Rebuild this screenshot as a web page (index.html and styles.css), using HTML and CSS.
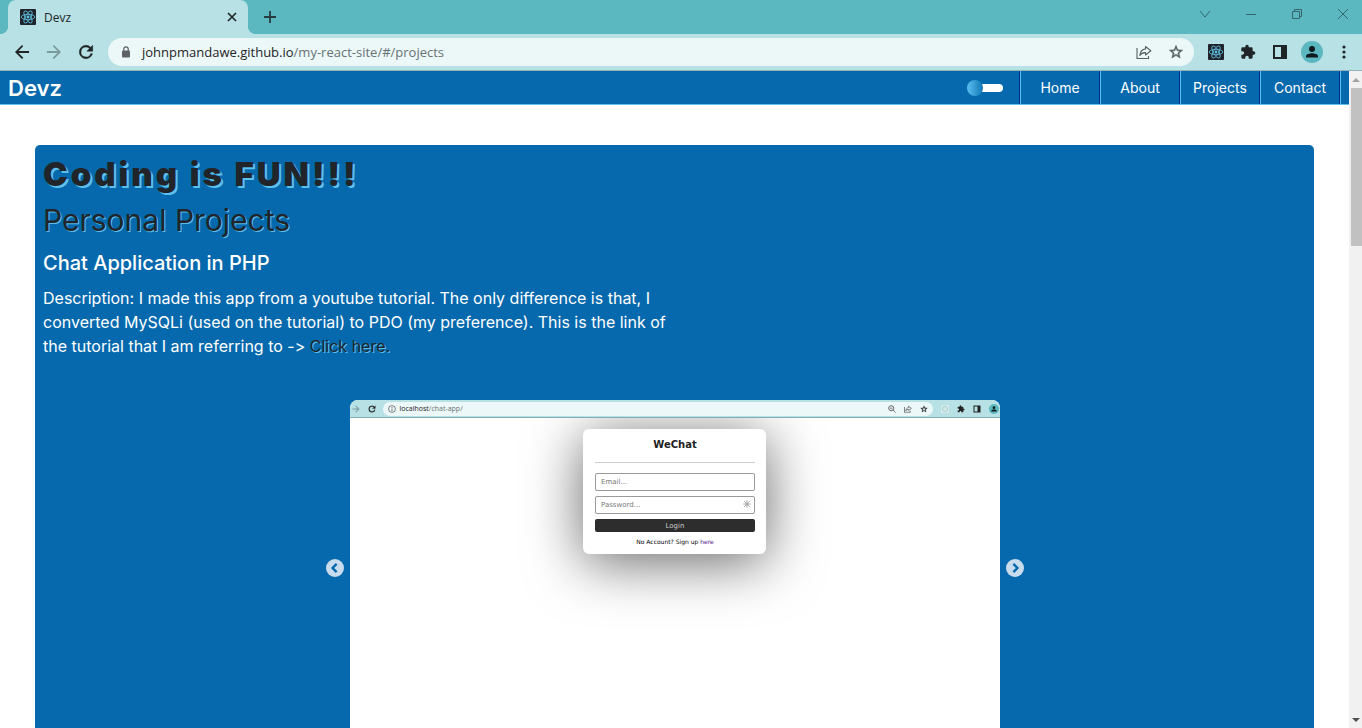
FILE: index.html
```html
<!DOCTYPE html>
<html lang="en">
<head>
<meta charset="utf-8">
<title>Devz</title>
<link rel="stylesheet" href="styles.css">
</head>
<body>
<svg class="defs" aria-hidden="true">
  <symbol id="react" viewBox="0 0 16 16">
    <rect width="16" height="16" rx="1" fill="#20232a"/>
    <g fill="none" stroke="#61c8ea" stroke-width=".8">
      <ellipse cx="8" cy="8" rx="6.8" ry="2.7"/>
      <ellipse cx="8" cy="8" rx="6.8" ry="2.7" transform="rotate(60 8 8)"/>
      <ellipse cx="8" cy="8" rx="6.8" ry="2.7" transform="rotate(120 8 8)"/>
    </g>
    <circle cx="8" cy="8" r="1.4" fill="#61c8ea"/>
  </symbol>
  <symbol id="arrow" viewBox="0 0 24 24"><path d="M20.500 10.800H7.830l5.590-5.590L12 3.600 3.600 12l8.400 8.400 1.610-1.610L7.830 13.200h12.670z"/></symbol>
  <symbol id="reload" viewBox="0 0 24 24"><path stroke="currentColor" stroke-width=".6" d="M17.650 6.350A7.960 7.960 0 0 0 12 4a8 8 0 1 0 7.730 10h-2.080A6 6 0 1 1 12 6c1.660 0 3.140.69 4.220 1.780L13 11h7V4z"/></symbol>
  <symbol id="share" viewBox="0 0 16 16"><g fill="none" stroke="currentColor" stroke-width="1.1"><path d="M1 4v10.500h11.500V12"/><path d="M9.500 2.500 14.800 6.800 9.500 11V8.600C6.500 8.500 5 9.500 3.800 11.500 4.200 7.800 6 5.300 9.500 4.900z" stroke-linejoin="round"/></g></symbol>
  <symbol id="star" viewBox="0 0 24 24"><path stroke="currentColor" stroke-width=".8" d="m22 9.240-7.190-.62L12 2 9.190 8.630 2 9.240l5.460 4.730L5.820 21 12 17.270 18.180 21l-1.630-7.030zM12 15.400l-3.760 2.270 1-4.280-3.320-2.880 4.380-.38L12 6.100l1.710 4.040 4.380.38-3.320 2.880 1 4.280z"/></symbol>
  <symbol id="puzzle" viewBox="0 0 24 24"><path d="M20.500 11H19V7a2 2 0 0 0-2-2h-4V3.500a2.500 2.500 0 0 0-5 0V5H4a2 2 0 0 0-2 2v3.800h1.500a2.700 2.700 0 0 1 0 5.400H2V20a2 2 0 0 0 2 2h3.800v-1.500a2.700 2.700 0 0 1 5.400 0V22H17a2 2 0 0 0 2-2v-4h1.500a2.500 2.500 0 0 0 0-5z"/></symbol>
  <symbol id="panel" viewBox="0 0 16 16"><path fill-rule="evenodd" d="M1 1h14v14H1zM3 3v10h6V3z"/></symbol>
  <symbol id="avatar" viewBox="0 0 22 22"><circle cx="11" cy="11" r="11" fill="#5bb8c1"/><circle cx="11" cy="8" r="3" fill="#111a1c"/><path d="M5 16.500v-1.300C5 13.200 9 12.300 11 12.300s6 .9 6 2.900v1.300z" fill="#111a1c"/></symbol>
</svg>

<header class="browser">
  <div class="tabstrip">
    <div class="tab">
      <svg class="i16"><use href="#react"/></svg>
      <span class="tab-title">Devz</span>
      <button class="tab-close" aria-label="Close tab"><svg class="i10" viewBox="0 0 10 10"><path d="m1 1 8 8M9 1 1 9" stroke="#20282a" stroke-width="1.700"/></svg></button>
    </div>
    <button class="new-tab" aria-label="New tab"><svg class="i12" viewBox="0 0 12 12"><path d="M6 0v12M0 6h12" stroke="#263c40" stroke-width="1.800"/></svg></button>
    <div class="window-buttons">
      <button aria-label="Search tabs"><svg class="i12" viewBox="0 0 12 12"><path d="m1 3 5 6 5-6"/></svg></button>
      <button aria-label="Minimize"><svg class="i12" viewBox="0 0 12 12"><path d="M1 6.500h10"/></svg></button>
      <button aria-label="Restore"><svg class="i12" viewBox="0 0 12 12"><path d="M1.500 3.500h7v7h-7zM3.500 3.500v-2h7v7h-2"/></svg></button>
      <button aria-label="Close window"><svg class="i12" viewBox="0 0 12 12"><path d="m1 1 10 10M11 1 1 11"/></svg></button>
    </div>
  </div>
  <div class="toolbar">
    <button class="tool" aria-label="Back"><svg class="i20"><use href="#arrow"/></svg></button>
    <button class="tool dim" aria-label="Forward"><svg class="i20 flip"><use href="#arrow"/></svg></button>
    <button class="tool" aria-label="Reload"><svg class="i20"><use href="#reload"/></svg></button>
    <div class="omnibox">
      <svg class="lock" viewBox="0 0 10 12"><rect x="1" y="4.500" width="8" height="7" rx="1" fill="#5f6368"/><path d="M2.800 5V3a2.200 2.200 0 0 1 4.400 0v2" fill="none" stroke="#5f6368" stroke-width="1.200"/></svg>
      <span class="url">johnpmandawe.github.io<span class="path">/my-react-site/#/projects</span></span>
      <button class="tool" aria-label="Share"><svg class="i16"><use href="#share"/></svg></button>
      <button class="tool" aria-label="Bookmark"><svg class="i16"><use href="#star"/></svg></button>
    </div>
    <button class="tool" aria-label="React tools"><svg class="i16"><use href="#react"/></svg></button>
    <button class="tool" aria-label="Extensions"><svg class="i16"><use href="#puzzle"/></svg></button>
    <button class="tool" aria-label="Side panel"><svg class="i16"><use href="#panel"/></svg></button>
    <button class="tool" aria-label="Profile"><svg class="i22"><use href="#avatar"/></svg></button>
    <button class="tool" aria-label="Menu"><svg class="i16" viewBox="0 0 16 16"><circle cx="8" cy="3" r="1.600"/><circle cx="8" cy="8" r="1.600"/><circle cx="8" cy="13" r="1.600"/></svg></button>
  </div>
</header>

<div class="viewport">
  <div class="page">
    <nav class="navbar">
      <a class="brand" href="#/">Devz</a>
      <input class="theme" type="checkbox" role="switch" aria-label="Dark theme">
      <div class="links">
        <a href="#/">Home</a>
        <a href="#/about">About</a>
        <a href="#/projects">Projects</a>
        <a href="#/contact">Contact</a>
      </div>
    </nav>
    <main class="card">
      <h1>Coding is FUN!!!</h1>
      <h2>Personal Projects</h2>
      <h3>Chat Application in PHP</h3>
      <p class="description">Description: I made this app from a youtube tutorial. The only difference is that, I converted MySQLi (used on the tutorial) to PDO (my preference). This is the link of the tutorial that I am referring to -&gt; <a href="#/tutorial">Click here.</a></p>
      <section class="carousel" aria-label="Screens">
        <button class="step" aria-label="Previous"><svg class="i18" viewBox="0 0 18 18"><circle cx="9" cy="9" r="9" fill="#c8dcee"/><path d="M10.600 4.800 6.600 9l4 4.200" fill="none" stroke="#0669ad" stroke-width="2.400"/></svg></button>
        <div class="slide">
          <div class="shot-bar">
            <svg class="i10 dim flip"><use href="#arrow"/></svg>
            <svg class="i10"><use href="#reload"/></svg>
            <div class="shot-omnibox">
              <svg class="i8" viewBox="0 0 8 8"><circle cx="4" cy="4" r="3.400" fill="none" stroke="#5f6368" stroke-width=".8"/><path d="M4 3.500V6M4 2v.9" stroke="#5f6368" stroke-width=".9"/></svg>
              <span class="shot-url">localhost<span class="path">/chat-app/</span></span>
              <svg class="i8" viewBox="0 0 8 8"><circle cx="3.200" cy="3.200" r="2.500" fill="none" stroke="#5f6368"/><path d="m5 5 2.500 2.500M2 3.200h2.400" stroke="#5f6368" stroke-width=".9"/></svg>
              <svg class="i8"><use href="#share"/></svg>
              <svg class="i8"><use href="#star"/></svg>
            </div>
            <svg class="i8" viewBox="0 0 16 16"><rect width="16" height="16" fill="#d5e9ea"/><circle cx="8" cy="8" r="5" fill="none" stroke="#a9cdd0" stroke-width="2"/></svg>
            <svg class="i8"><use href="#puzzle"/></svg>
            <svg class="i8"><use href="#panel"/></svg>
            <svg class="i10"><use href="#avatar"/></svg>
          </div>
          <div class="shot-body">
            <form class="login">
              <h4>WeChat</h4>
              <input type="email" placeholder="Email..." aria-label="Email">
              <div class="password">
                <input type="password" placeholder="Password..." aria-label="Password">
                <svg class="i8 key" viewBox="0 0 8 8"><path d="M4 0v8M0 4h8M1 1l6 6M7 1 1 7" stroke="#999" stroke-width=".7"/><circle cx="4" cy="4" r="1.600" fill="#aaa"/></svg>
              </div>
              <button type="button">Login</button>
              <p>No Account? Sign up <a href="#/signup">here</a></p>
            </form>
          </div>
        </div>
        <button class="step" aria-label="Next"><svg class="i18" viewBox="0 0 18 18"><circle cx="9" cy="9" r="9" fill="#c8dcee"/><path d="m7.400 4.800 4 4.200-4 4.200" fill="none" stroke="#0669ad" stroke-width="2.400"/></svg></button>
      </section>
    </main>
  </div>
  <div class="scrollbar" aria-hidden="true">
    <svg viewBox="0 0 13 17"><path d="M3 11h8L7 7z" fill="#a3a3a3"/></svg>
    <div class="thumb"></div>
    <svg viewBox="0 0 13 17"><path d="M3 7h8l-4 4z" fill="#505050"/></svg>
  </div>
</div>
</body>
</html>
```

FILE: styles.css
```css
* { box-sizing: border-box; }
body {
  margin: 0;
  height: 100vh;
  display: flex;
  flex-direction: column;
  overflow: hidden;
  font-family: Inter, "Open Sans", sans-serif;
  font-feature-settings: "calt" 0;
  color: #fff;
  background: #fff;
}
h1, h2, h3, h4, p { margin: 0; }
button { border: 0; padding: 0; background: none; font: inherit; color: inherit; }
a { color: inherit; text-decoration: none; }
svg { display: block; flex: none; fill: currentColor; }
.defs { position: absolute; width: 0; height: 0; }
.i8 { width: 8px; height: 8px; }
.i10 { width: 10px; height: 10px; }
.i12 { width: 12px; height: 12px; }
.i16 { width: 16px; height: 16px; }
.i18 { width: 18px; height: 18px; }
.i20 { width: 20px; height: 20px; }
.i22 { width: 22px; height: 22px; }
.flip { transform: scaleX(-1); }

/* Browser frame */
.browser {
  flex: none;
  font-family: "Open Sans", sans-serif;
  color: #1f2426;
  background: #b7e1e4;
  border-bottom: 1px solid #92b4b7;
}
.tabstrip { display: flex; height: 34px; padding-left: 8px; background: #5bb8c1; }
.tab {
  position: relative;
  display: flex;
  align-items: center;
  width: 240px;
  padding: 0 10px 0 12px;
  gap: 8px;
  border-radius: 8px 8px 0 0;
  background: #b7e1e4;
  font-size: 12px;
}
.tab::before, .tab::after {
  content: "";
  position: absolute;
  bottom: 0;
  width: 8px;
  height: 8px;
}
.tab::before { left: -8px; background: radial-gradient(circle at 0 0, #5bb8c1 8px, #b7e1e4 8px); }
.tab::after { right: -8px; background: radial-gradient(circle at 100% 0, #5bb8c1 8px, #b7e1e4 8px); }
.tab-title { flex: 1; }
.tab-close { display: grid; place-items: center; width: 12px; height: 16px; }
.new-tab { display: grid; place-items: center; width: 28px; margin-left: 8px; }
.window-buttons { display: flex; gap: 8px; height: 28px; margin-left: auto; }
.window-buttons button { display: grid; place-items: center; width: 38px; }
.window-buttons svg { fill: none; stroke: #34666c; stroke-width: 1; }
.toolbar { display: flex; align-items: center; height: 36px; padding: 0 2px 0 6px; }
.tool { display: grid; place-items: center; flex: none; width: 32px; height: 28px; }
.dim { color: #7a9a9d; }
.omnibox {
  display: flex;
  align-items: center;
  flex: 1;
  height: 28px;
  margin: 0 6px;
  padding: 0 2px 0 13px;
  border-radius: 14px;
  background: #ecf8f8;
}
.omnibox .tool { color: #55605f; }
.lock { width: 10px; height: 12px; }
.url { flex: 1; margin-left: 11px; font-size: 13px; }
.path { color: #687274; }

/* Page */
.viewport { display: flex; flex: 1; min-height: 0; }
.page { flex: 1; min-width: 0; overflow: hidden; }
.navbar {
  display: flex;
  align-items: center;
  height: 34px;
  padding: 0 8px;
  background: #0669ad;
  border-bottom: 1px solid #5bc0ee;
}
.brand { font-size: 22px; font-weight: 600; line-height: 32px; }
.theme {
  appearance: none;
  position: relative;
  width: 32px;
  height: 8px;
  margin: 0 16px 0 auto;
  border-radius: 4px;
  background: #fff;
}
.theme::before {
  content: "";
  position: absolute;
  left: -4px;
  top: -4px;
  width: 16px;
  height: 16px;
  border-radius: 50%;
  background: linear-gradient(90deg, #5bc0ee, #0f76b8);
}
.links { display: flex; align-self: stretch; border-left: 1px solid #002a8c; border-right: 1px solid #5bc0ee; }
.links a {
  width: 80px;
  border-left: 1px solid #5bc0ee;
  border-right: 1px solid #002a8c;
  font-size: 14px;
  line-height: 33px;
  text-align: center;
}
.card { margin: 40px 35px; padding: 8px; border-radius: 5px; background: #0669ad; }
.card h1, .card h2, .description a { color: #212529; text-shadow: 1px 1px #5bc0ee; }
.card h1 { font-size: 33px; font-weight: 900; line-height: 42px; letter-spacing: 3px; text-shadow: 2px 2px #5bc0ee; }
.card h2 { margin-top: 7px; font-size: 30px; font-weight: 400; line-height: 36px; }
.card h3 { margin-top: 13px; font-size: 20px; font-weight: 500; line-height: 24px; }
.description { width: 51%; margin-top: 11px; font-size: 16px; line-height: 24px; }
.carousel { display: flex; align-items: center; justify-content: center; gap: 6px; margin-top: 42px; }
.slide { width: 650px; overflow: hidden; border-radius: 8px; background: #fff; color: #222; }

/* Slide contents */
.shot-bar {
  display: flex;
  align-items: center;
  gap: 8px;
  height: 18px;
  padding: 0 1px;
  background: #b7e1e4;
  border-bottom: 1px solid #83aeb2;
  font: 7px "Open Sans", sans-serif;
}
.shot-bar > .i10 + .i10 { margin-left: -2px; }
.shot-bar > .i10:first-child { margin-right: 0; }
.shot-omnibox {
  display: flex;
  align-items: center;
  flex: 1;
  gap: 8px;
  height: 14px;
  margin-left: -2px;
  padding: 0 5px;
  border-radius: 7px;
  background: #ecf8f8;
}
.shot-url { flex: 1; margin-left: -4px; }
.shot-body { height: 318px; padding-top: 11px; overflow: hidden; }
.login {
  width: 183px;
  margin: 0 auto;
  padding: 6px 11px 6px 12px;
  border-radius: 6px;
  background: #fff;
  box-shadow: 0 8px 56px rgba(0, 0, 0, .6);
  font: 7px "DejaVu Sans", sans-serif;
}
.login h4 {
  height: 28px;
  margin-bottom: 10px;
  border-bottom: 1px solid #ccc;
  font-size: 10px;
  line-height: 20px;
  text-align: center;
}
.login input {
  display: block;
  width: 100%;
  height: 18px;
  margin-bottom: 5px;
  padding: 0 5px;
  border: 1px solid #999;
  border-radius: 2px;
  background: #fff;
  font: inherit;
}
.login input::placeholder { color: #777; }
.password { position: relative; }
.key { position: absolute; right: 4px; top: 4px; }
.login button {
  display: block;
  width: 100%;
  height: 13px;
  border-radius: 2px;
  background: #2d2d2d;
  color: #ccc;
}
.login p { padding-top: 4px; color: #000; font-size: 6px; line-height: 12px; text-align: center; }
.login p a { color: #551a8b; }

/* Scrollbar */
.scrollbar { display: flex; flex-direction: column; width: 13px; background: #f1f1f1; }
.scrollbar svg { width: 13px; height: 17px; }
.thumb { height: 24%; margin: 0 0 auto 2px; background: #c1c1c1; }
```
